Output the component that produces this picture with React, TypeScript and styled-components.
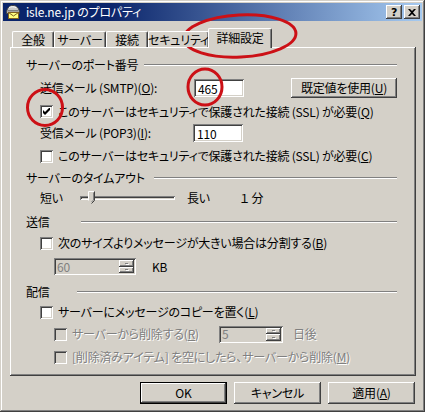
import React from 'react';
import styled, { createGlobalStyle } from 'styled-components';

const GlobalStyle = createGlobalStyle`
  html, body {
    margin: 0;
    padding: 0;
    background: #ffffff;
  }
  body {
    font-family: "Noto Sans CJK JP", "Noto Sans", sans-serif;
    font-size: 12px;
  }
`;

const Window = styled.div`
  position: relative;
  box-sizing: border-box;
  width: 425px;
  height: 412px;
  padding: 3px;
  background: #d4d0c8;
  box-shadow: inset -1px -1px #404040, inset 1px 1px #d4d0c8,
    inset -2px -2px #808080, inset 2px 2px #ffffff;
  display: flex;
  flex-direction: column;
  color: #000;
  font-feature-settings: "palt";
  letter-spacing: -0.2px;
  line-height: 1;
`;

const TitleBar = styled.div`
  height: 18px;
  display: flex;
  align-items: center;
  padding: 0 2px;
  background: linear-gradient(to right, #0a246a 0%, #0a246a 25%, #a6caf0 100%);
  color: #fff;
`;

const TitleText = styled.span`
  margin-left: 5px;
  font-size: 12px;
  flex: 1;
  white-space: nowrap;
`;

const CaptionButton = styled.div`
  box-sizing: border-box;
  width: 16px;
  height: 14px;
  margin-left: 2px;
  background: #d4d0c8;
  box-shadow: inset -1px -1px #404040, inset 1px 1px #ffffff,
    inset -2px -2px #808080;
  display: flex;
  align-items: center;
  justify-content: center;
  color: #000;
  font-family: "DejaVu Sans", sans-serif;
  font-weight: bold;
  font-size: 11px;
`;

const Body = styled.div`
  display: flex;
  flex-direction: column;
  padding: 7px 6px 0 7px;
`;

const TabStrip = styled.div`
  position: relative;
  z-index: 1;
  display: flex;
  align-items: flex-end;
  height: 20px;
  padding-left: 2px;
  margin-bottom: -1px;
`;

const Tab = styled.div<{ $w: number; $active?: boolean }>`
  box-sizing: border-box;
  width: ${(p) => p.$w}px;
  height: ${(p) => (p.$active ? 20 : 16)}px;
  margin-bottom: ${(p) => (p.$active ? 0 : 1)}px;
  margin-left: ${(p) => (p.$active ? -1 : 0)}px;
  background: #d4d0c8;
  border-top: 1px solid #ffffff;
  border-left: 1px solid #ffffff;
  border-right: 1px solid #404040;
  border-top-left-radius: 2px;
  border-top-right-radius: 2px;
  box-shadow: inset -1px 0 #808080;
  display: flex;
  align-items: center;
  justify-content: center;
  padding-bottom: ${(p) => (p.$active ? 2 : 0)}px;
  font-size: 12px;
  white-space: nowrap;
  overflow: visible;
`;

const Panel = styled.div`
  box-sizing: border-box;
  height: 329px;
  padding: 10px 19px 0 16px;
  background: #d4d0c8;
  box-shadow: inset -1px -1px #404040, inset 1px 1px #ffffff,
    inset -2px -2px #808080;
  display: flex;
  flex-direction: column;
`;

const SectionHeader = styled.div<{ $mt?: number }>`
  display: flex;
  align-items: center;
  height: 16px;
  margin-top: ${(p) => p.$mt ?? 0}px;
`;

const SectionLabel = styled.span<{ $w: number }>`
  width: ${(p) => p.$w}px;
  white-space: nowrap;
`;

const Etch = styled.div`
  flex: 1;
  height: 0;
  border-top: 1px solid #808080;
  border-bottom: 1px solid #ffffff;
`;

const Row = styled.div<{ $h: number; $mt?: number; $indent?: number }>`
  display: flex;
  align-items: center;
  height: ${(p) => p.$h}px;
  margin-top: ${(p) => p.$mt ?? 0}px;
  padding-left: ${(p) => p.$indent ?? 14}px;
  white-space: nowrap;
`;

const FieldLabel = styled.span<{ $w?: number; $disabled?: boolean }>`
  width: ${(p) => (p.$w ? `${p.$w}px` : 'auto')};
  flex: none;
  color: ${(p) => (p.$disabled ? '#808080' : '#000')};
  text-shadow: ${(p) => (p.$disabled ? '1px 1px 0 #ffffff' : 'none')};
`;

const sunken = `
  box-shadow: inset 1px 1px #808080, inset -1px -1px #ffffff,
    inset 2px 2px #404040, inset -2px -2px #d4d0c8;
`;

const TextBox = styled.div`
  box-sizing: border-box;
  width: 50px;
  height: 18px;
  padding: 2px 0 0 4px;
  background: #ffffff;
  ${sunken}
  display: flex;
  align-items: center;
`;

const PushButton = styled.div<{ $w: number; $h: number; $default?: boolean }>`
  box-sizing: border-box;
  width: ${(p) => p.$w}px;
  height: ${(p) => p.$h}px;
  background: #d4d0c8;
  box-shadow: ${(p) =>
    p.$default
      ? 'inset 0 0 0 1px #000000, inset -2px -2px #404040, inset 2px 2px #ffffff, inset -3px -3px #808080'
      : 'inset -1px -1px #404040, inset 1px 1px #ffffff, inset -2px -2px #808080'};
  display: flex;
  align-items: center;
  justify-content: center;
  flex: none;
`;

const Check = styled.div<{ $disabled?: boolean }>`
  box-sizing: border-box;
  width: 13px;
  height: 13px;
  flex: none;
  background: ${(p) => (p.$disabled ? '#d4d0c8' : '#ffffff')};
  ${sunken}
  display: flex;
  align-items: center;
  justify-content: center;
`;

const CheckText = styled.span<{ $disabled?: boolean }>`
  margin-left: 5px;
  color: ${(p) => (p.$disabled ? '#808080' : '#000')};
  text-shadow: ${(p) => (p.$disabled ? '1px 1px 0 #ffffff' : 'none')};
`;

const Slider = styled.div`
  position: relative;
  width: 95px;
  height: 12px;
  flex: none;
  display: flex;
  align-items: center;
`;

const Track = styled.div`
  box-sizing: border-box;
  width: 100%;
  height: 4px;
  box-shadow: inset 1px 1px #808080, inset -1px -1px #ffffff,
    inset 2px 2px #404040, inset -2px -2px #d4d0c8;
`;

const Thumb = styled.svg`
  position: absolute;
  left: 8px;
  top: -1px;
`;

const Spinner = styled.div<{ $w: number }>`
  box-sizing: border-box;
  width: ${(p) => p.$w}px;
  height: 17px;
  flex: none;
  padding: 2px 2px 2px 3px;
  background: #d4d0c8;
  ${sunken}
  display: flex;
  align-items: center;
  color: #808080;
`;

const SpinValue = styled.span`
  flex: 1;
`;

const SpinButtons = styled.div`
  display: flex;
  flex-direction: column;
  width: 15px;
  height: 13px;
`;

const SpinHalf = styled.div`
  box-sizing: border-box;
  flex: 1;
  background: #d4d0c8;
  box-shadow: inset -1px -1px #404040, inset 1px 1px #ffffff,
    inset -2px -2px #808080;
  display: flex;
  align-items: center;
  justify-content: center;
`;

const Dot = styled.div`
  width: 3px;
  height: 1px;
  background: #808080;
  box-shadow: 1px 1px 0 #ffffff;
`;

const ButtonBar = styled.div`
  display: flex;
  justify-content: flex-end;
  gap: 7px;
  margin-top: 6px;
  padding-right: 1px;
`;

const Annotations = styled.svg`
  position: absolute;
  top: 0;
  left: 0;
  pointer-events: none;
`;

const MailIcon = () => (
  <svg width="16" height="16" viewBox="0 0 16 16">
    <path d="M1.5 9.5 C1.5 4 4.5 1.5 8 1.5 C11.5 1.5 14.5 4 14.5 9.5 Z" fill="#c8c8c8" stroke="#404040" />
    <path d="M3 6.5 H13 M2.5 8 H13.5" stroke="#808080" />
    <path d="M4 3.5 C6 2.5 9 2.5 11 3.5" stroke="#ffffff" fill="none" />
    <rect x="3.5" y="8.5" width="10" height="6" fill="#ffff80" stroke="#806020" />
    <path d="M3.5 8.5 L8.5 12 L13.5 8.5" fill="none" stroke="#806020" />
  </svg>
);

const CheckMark = () => (
  <svg width="7" height="7" viewBox="0 0 7 7">
    <path d="M0 2 L2 4 L6 0 L7 0 L7 2 L2 7 L0 5 Z" fill="#000" />
  </svg>
);

const Spin = ({ w, value }: { w: number; value: string }) => (
  <Spinner $w={w}>
    <SpinValue>{value}</SpinValue>
    <SpinButtons>
      <SpinHalf>
        <Dot />
      </SpinHalf>
      <SpinHalf>
        <Dot />
      </SpinHalf>
    </SpinButtons>
  </Spinner>
);

export default function App() {
  return (
    <>
      <GlobalStyle />
      <Window>
        <TitleBar>
          <MailIcon />
          <TitleText>isle.ne.jp のプロパティ</TitleText>
          <CaptionButton>?</CaptionButton>
          <CaptionButton>
            <svg width="8" height="7" viewBox="0 0 8 7">
              <path d="M0 0 L2 0 L4 2 L6 0 L8 0 L5 3.5 L8 7 L6 7 L4 5 L2 7 L0 7 L3 3.5 Z" fill="#000" />
            </svg>
          </CaptionButton>
        </TitleBar>

        <Body>
          <TabStrip>
            <Tab $w={42}>全般</Tab>
            <Tab $w={52}>サーバー</Tab>
            <Tab $w={42}>接続</Tab>
            <Tab $w={61}>セキュリティ</Tab>
            <Tab $w={64} $active>
              詳細設定
            </Tab>
          </TabStrip>

          <Panel>
            <SectionHeader>
              <SectionLabel $w={118}>サーバーのポート番号</SectionLabel>
              <Etch />
            </SectionHeader>
            <Row $h={22} $mt={4}>
              <FieldLabel $w={154}>
                送信メール (SMTP)(<u>O</u>):
              </FieldLabel>
              <TextBox>465</TextBox>
              <PushButton $w={106} $h={20} style={{ marginLeft: 'auto' }}>
                既定値を使用(<u>U</u>)
              </PushButton>
            </Row>
            <Row $h={25}>
              <Check>
                <CheckMark />
              </Check>
              <CheckText>
                このサーバーはセキュリティで保護された接続 (SSL) が必要(<u>Q</u>)
              </CheckText>
            </Row>
            <Row $h={18}>
              <FieldLabel $w={153}>
                受信メール (POP3)(<u>I</u>):
              </FieldLabel>
              <TextBox>110</TextBox>
            </Row>
            <Row $h={28}>
              <Check />
              <CheckText>
                このサーバーはセキュリティで保護された接続 (SSL) が必要(<u>C</u>)
              </CheckText>
            </Row>

            <SectionHeader>
              <SectionLabel $w={128}>サーバーのタイムアウト</SectionLabel>
              <Etch />
            </SectionHeader>
            <Row $h={22} $mt={1}>
              <FieldLabel $w={40}>短い</FieldLabel>
              <Slider>
                <Track />
                <Thumb width="7" height="13" viewBox="0 0 7 13">
                  <path d="M0.5 0.5 H6.5 V9.5 L3.5 12.5 L0.5 9.5 Z" fill="#d4d0c8" />
                  <path d="M0.5 9.5 V0.5 H6" fill="none" stroke="#ffffff" />
                  <path d="M6.5 0.5 V9.5 L3.5 12.5" fill="none" stroke="#404040" />
                  <path d="M5.5 1.5 V9 L3.5 11" fill="none" stroke="#808080" />
                </Thumb>
              </Slider>
              <FieldLabel $w={53} style={{ marginLeft: 12 }}>
                長い
              </FieldLabel>
              <FieldLabel>１ 分</FieldLabel>
            </Row>

            <SectionHeader $mt={5}>
              <SectionLabel $w={55}>送信</SectionLabel>
              <Etch />
            </SectionHeader>
            <Row $h={22} $mt={2}>
              <Check />
              <CheckText>
                次のサイズよりメッセージが大きい場合は分割する(<u>B</u>)
              </CheckText>
            </Row>
            <Row $h={17} $mt={4} $indent={28}>
              <Spin w={82} value="60" />
              <FieldLabel style={{ marginLeft: 16 }}>KB</FieldLabel>
            </Row>

            <SectionHeader $mt={9}>
              <SectionLabel $w={51}>配信</SectionLabel>
              <Etch />
            </SectionHeader>
            <Row $h={22} $mt={1}>
              <Check />
              <CheckText>
                サーバーにメッセージのコピーを置く(<u>L</u>)
              </CheckText>
            </Row>
            <Row $h={18} $mt={2} $indent={28}>
              <Check $disabled />
              <CheckText $disabled style={{ width: 147 }}>
                サーバーから削除する(<u>R</u>)
              </CheckText>
              <Spin w={64} value="5" />
              <FieldLabel $disabled style={{ marginLeft: 10 }}>
                日後
              </FieldLabel>
            </Row>
            <Row $h={22} $mt={3} $indent={28}>
              <Check $disabled />
              <CheckText $disabled>
                [削除済みアイテム] を空にしたら、サーバーから削除(<u>M</u>)
              </CheckText>
            </Row>
          </Panel>

          <ButtonBar>
            <PushButton $w={87} $h={22} $default>
              OK
            </PushButton>
            <PushButton $w={87} $h={22}>
              キャンセル
            </PushButton>
            <PushButton $w={87} $h={22}>
              適用(<u>A</u>)
            </PushButton>
          </ButtonBar>
        </Body>

        <Annotations width="425" height="412" viewBox="0 0 425 412">
          <g fill="none" stroke="#cc1016" strokeWidth="3">
            <ellipse cx="240" cy="36" rx="56" ry="21" transform="rotate(-3 240 36)" />
            <ellipse cx="205" cy="87" rx="17" ry="18" />
            <ellipse cx="45" cy="107.5" rx="17.5" ry="18" />
          </g>
        </Annotations>
      </Window>
    </>
  );
}
